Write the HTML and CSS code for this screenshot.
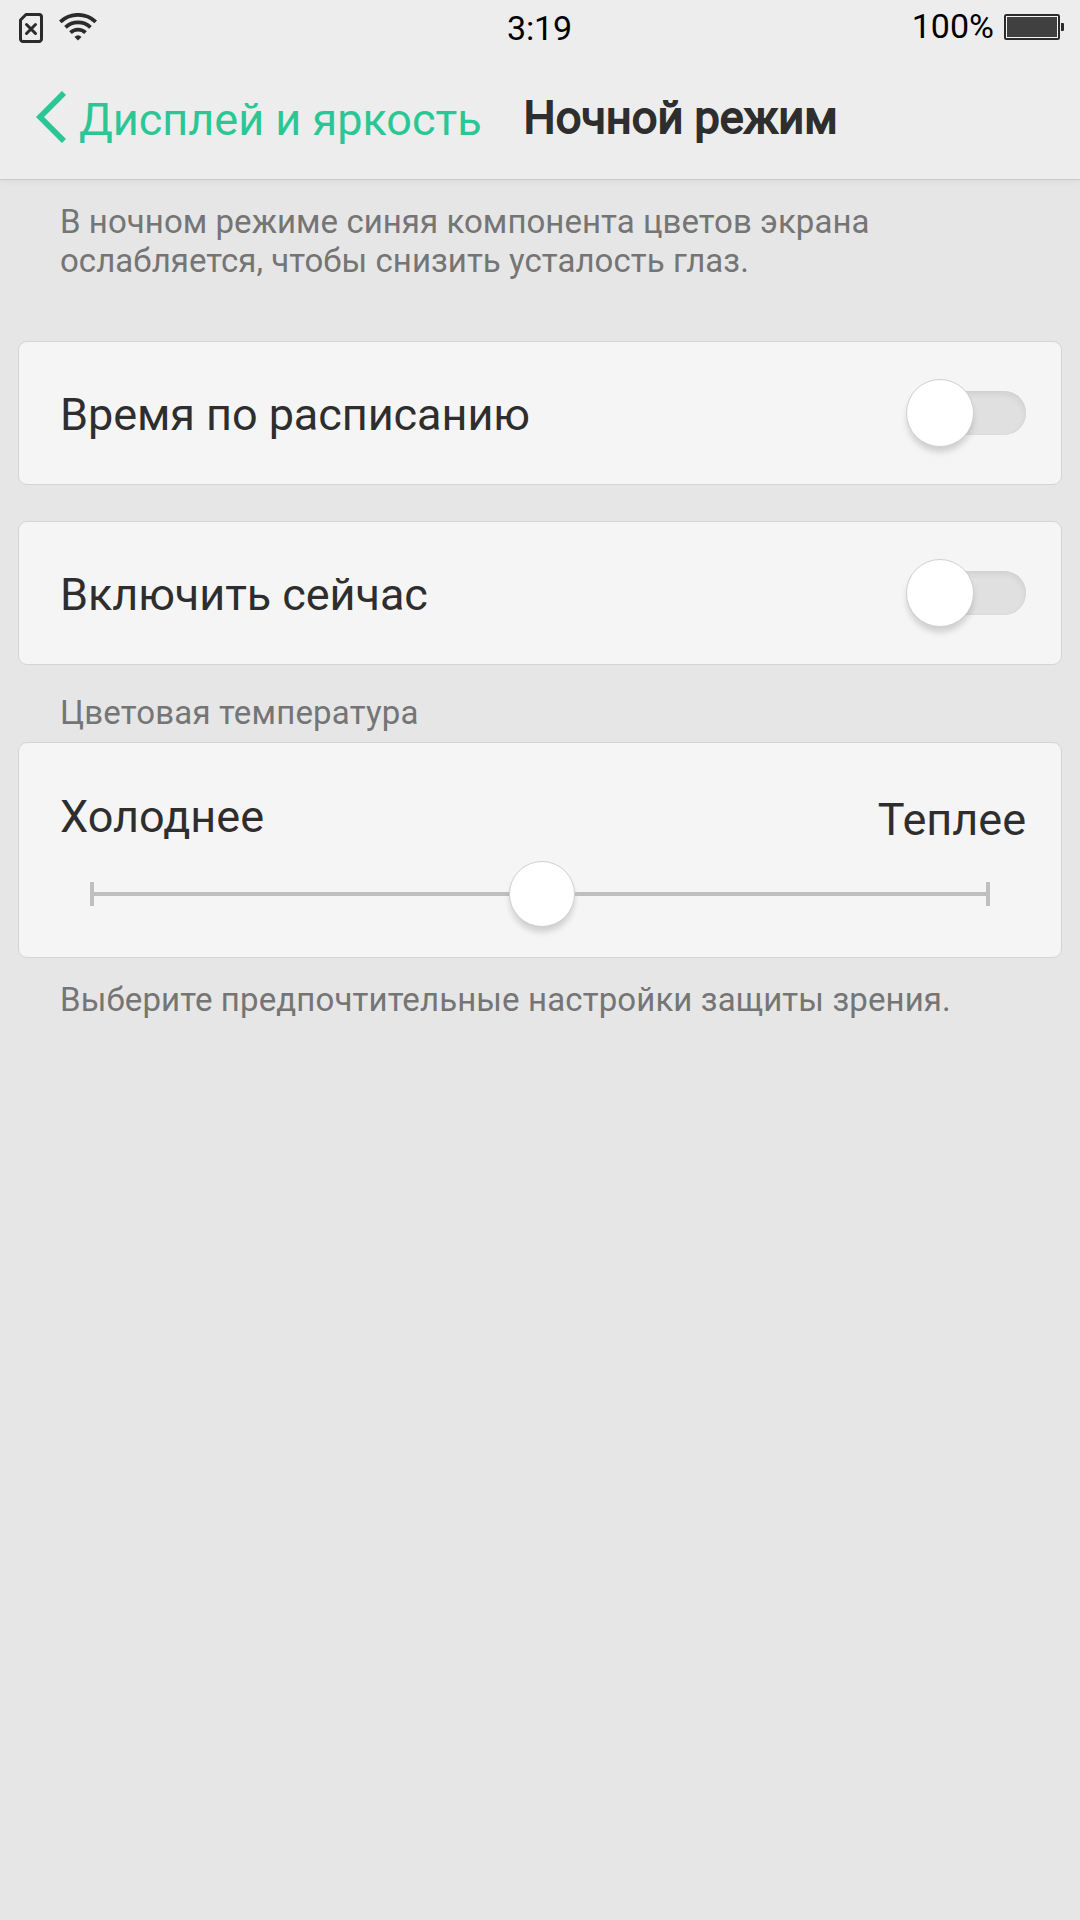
FILE: index.html
```html
<!DOCTYPE html>
<html lang="ru">
<head>
  <meta charset="UTF-8">
  <meta name="viewport" content="width=device-width, initial-scale=1.0">
  <title>Ночной режим</title>
  <link rel="stylesheet" href="styles.css">
</head>
<body>
  <header class="top">
    <div class="status-bar">
      <div class="status-left">
        <svg class="sim-icon" width="24" height="30" viewBox="0 0 24 30">
          <path d="M7 1.5H20A2.5 2.5 0 0 1 22.5 4V26A2.5 2.5 0 0 1 20 28.5H4A2.5 2.5 0 0 1 1.5 26V7Z" fill="none" stroke="#2b2b2b" stroke-width="3" stroke-linejoin="round"/>
          <path d="M7.5 11.5L16.5 20.5M16.5 11.5L7.5 20.5" fill="none" stroke="#2b2b2b" stroke-width="3" stroke-linecap="round"/>
        </svg>
        <svg class="wifi-icon" width="38" height="28" viewBox="0 0 38 28">
          <g fill="none" stroke="#2b2b2b" stroke-width="3.8">
            <path d="M1.3 8.8A26 26 0 0 1 36.7 8.8"/>
            <path d="M6.5 14.3A18.2 18.2 0 0 1 31.5 14.3"/>
            <path d="M11.5 19.6A10.8 10.8 0 0 1 26.5 19.6"/>
          </g>
          <path d="M15.5 24Q19 20.6 22.5 24L19 27.5Z" fill="#2b2b2b"/>
        </svg>
      </div>
      <div class="clock">3:19</div>
      <div class="status-right">
        <span class="percent">100%</span>
        <svg class="battery-icon" width="60" height="26" viewBox="0 0 60 26">
          <rect x="1" y="1" width="54" height="24" rx="1.5" fill="none" stroke="#2b2b2b" stroke-width="2"/>
          <rect x="3" y="3" width="50" height="20" fill="#404040"/>
          <rect x="2.5" y="2.5" width="51" height="21" fill="none" stroke="#f4f4f4" stroke-width="1"/>
          <path d="M57 9h2q1 0 1 1v6q0 1-1 1h-2z" fill="#2b2b2b"/>
        </svg>
      </div>
    </div>
    <div class="nav">
      <a class="back">
        <svg class="back-icon" width="30" height="52" viewBox="0 0 30 52">
          <path d="M28 2L4 26L28 50" fill="none" stroke="#2ac795" stroke-width="5.8"/>
        </svg>
        <span class="back-label">Дисплей и яркость</span>
      </a>
      <h1 class="title">Ночной режим</h1>
    </div>
  </header>

  <main class="content">
    <p class="note intro">В ночном режиме синяя компонента цветов экрана ослабляется, чтобы снизить усталость глаз.</p>

    <div class="card row">
      <span class="label">Время по расписанию</span>
      <div class="toggle"><div class="knob"></div></div>
    </div>

    <div class="card row">
      <span class="label">Включить сейчас</span>
      <div class="toggle"><div class="knob"></div></div>
    </div>

    <p class="note section">Цветовая температура</p>

    <div class="card temperature">
      <div class="range-labels">
        <span class="label">Холоднее</span>
        <span class="label warm">Теплее</span>
      </div>
      <div class="slider">
        <div class="tick"></div>
        <div class="line before"></div>
        <div class="handle"></div>
        <div class="line"></div>
        <div class="tick"></div>
      </div>
    </div>

    <p class="note hint">Выберите предпочтительные настройки защиты зрения.</p>
  </main>
</body>
</html>
```

FILE: styles.css
```css
* {
  box-sizing: border-box;
}
body {
  margin: 0;
  min-height: 100vh;
  background-color: #e6e6e6;
  font-family: Roboto, sans-serif;
  color: #2e2e2e;
}
svg {
  display: block;
  flex-shrink: 0;
}

/* status bar + navigation */
.top {
  height: 180px;
  background-color: #ededed;
  border-bottom: 1px solid #cacaca;
  box-shadow: 0 1px 6px rgba(0, 0, 0, 0.07);
}
.status-bar {
  display: grid;
  grid-template-columns: 1fr auto 1fr;
  height: 54px;
  padding: 0 16px 0 19px;
  font-size: 34px;
  line-height: 40px;
  color: #000;
}
.status-left {
  display: flex;
  gap: 16px;
  padding-top: 13px;
}
.clock {
  padding-top: 8px;
  padding-right: 4px;
  letter-spacing: -0.2px;
}
.status-right {
  display: flex;
  justify-content: flex-end;
  gap: 10px;
  padding-top: 6px;
}
.battery-icon {
  margin-top: 8px;
}
.nav {
  display: flex;
  height: 125px;
  padding-left: 36px;
}
.back {
  display: flex;
  gap: 13px;
  color: #2ac795;
}
.back-icon {
  margin-top: 37px;
}
.back-label {
  padding-top: 39px;
  font-size: 45px;
  line-height: 53px;
}
.title {
  margin: 0 0 0 42px;
  padding-top: 37px;
  font-size: 45px;
  line-height: 53px;
  font-weight: 400;
  -webkit-text-stroke: 1.8px #2e2e2e;
}

/* settings */
.content {
  padding: 22px 18px 0;
}
.note {
  margin: 0;
  padding: 0 42px;
  font-size: 33px;
  line-height: 39px;
  color: #757575;
}
.intro {
  max-width: 930px;
  margin-bottom: 61px;
  letter-spacing: 0.05px;
}
.card {
  background-color: #f5f5f5;
  border: 1px solid #d4d4d4;
  border-radius: 9px;
}
.row {
  display: flex;
  align-items: center;
  justify-content: space-between;
  height: 144px;
  padding: 0 35px 0 41px;
  margin-bottom: 36px;
}
.label {
  font-size: 45px;
  line-height: 53px;
}
.row .label {
  padding-top: 3px;
  letter-spacing: -0.06px;
}
.toggle {
  display: flex;
  align-items: center;
  width: 110px;
  height: 44px;
  border-radius: 22px;
  background-color: #e0e0e0;
  box-shadow: inset 0 3px 6px rgba(0, 0, 0, 0.07), inset 0 0 1px rgba(0, 0, 0, 0.1);
}
.knob,
.handle {
  flex-shrink: 0;
  border: 1px solid #d0d0d0;
  border-radius: 50%;
  background-color: #fff;
  box-shadow: 0 6px 6px -1px rgba(0, 0, 0, 0.16);
}
.knob {
  width: 68px;
  height: 68px;
  margin-left: -10px;
}
.section {
  margin-top: -8px;
  margin-bottom: 10px;
  letter-spacing: 0.18px;
}
.temperature {
  height: 216px;
  padding: 47px 35px 0 41px;
}
.range-labels {
  display: flex;
  justify-content: space-between;
}
.warm {
  padding-top: 3px;
}
.slider {
  display: flex;
  align-items: center;
  height: 66px;
  margin: 15px 36px 0 30px;
}
.tick {
  width: 4px;
  height: 24px;
  background-color: #bfbfbf;
}
.line {
  flex: 1;
  height: 4px;
  background-color: #bfbfbf;
}
.line.before {
  flex: 0 0 415px;
}
.handle {
  width: 66px;
  height: 66px;
}
.hint {
  margin-top: 22px;
  letter-spacing: 0.12px;
}
```
